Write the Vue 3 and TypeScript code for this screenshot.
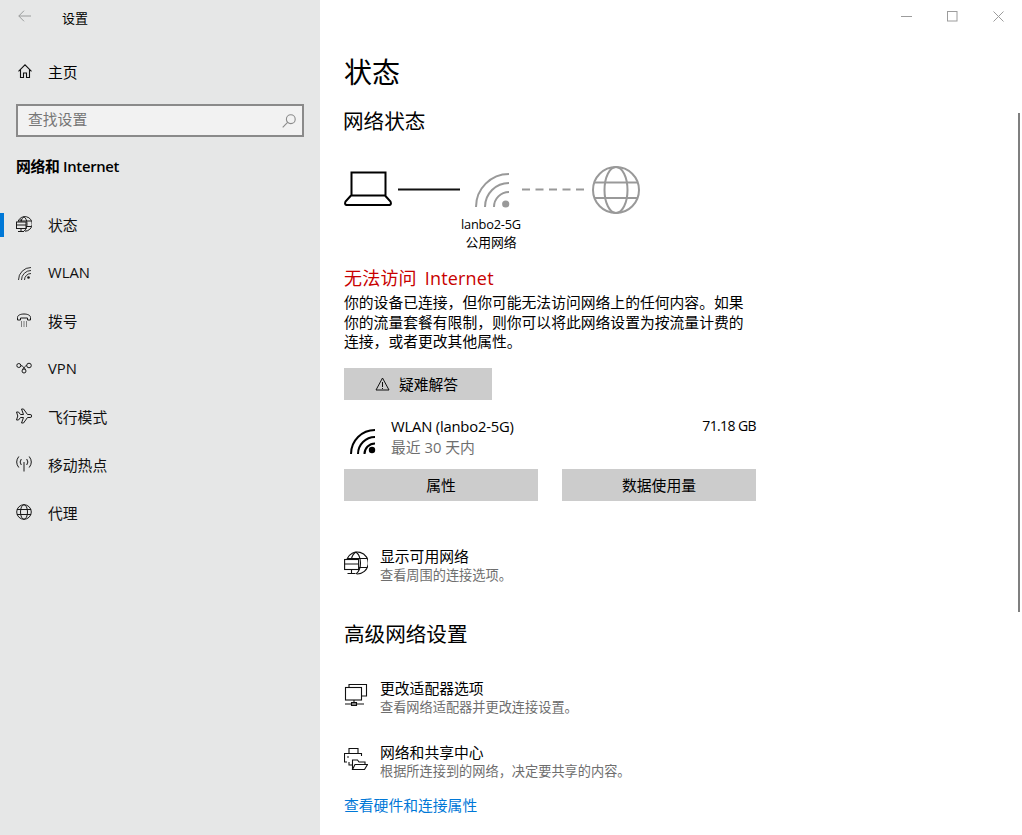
<script setup lang="ts">
type NavItem = { label: string; icon: string; active?: boolean };

const navItems: NavItem[] = [
  { label: "状态", icon: "status", active: true },
  { label: "WLAN", icon: "wifi" },
  { label: "拨号", icon: "dial" },
  { label: "VPN", icon: "vpn" },
  { label: "飞行模式", icon: "plane" },
  { label: "移动热点", icon: "hotspot" },
  { label: "代理", icon: "globe" },
];
</script>

<template>
  <div class="window">
    <aside class="sidebar">
      <div class="titlebar">
        <svg class="back" width="13" height="12" viewBox="0 0 13 12" fill="none" stroke="#9a9c9c" stroke-width="1">
          <path d="M.8 6H13M6 .7.8 6 6 11.300" />
        </svg>
        <span class="app-title">设置</span>
      </div>

      <div class="home">
        <svg width="14" height="14" viewBox="0 0 14 14" fill="none" stroke="#111" stroke-width="1.100">
          <path d="M.5 7.300 7 .8l6.500 6.500M2.500 5.500v8h3v-4.500h3v4.500h3v-8" />
        </svg>
        <span>主页</span>
      </div>

      <div class="search">
        <span class="search-text">查找设置</span>
        <svg width="14" height="14" viewBox="0 0 14 14" fill="none" stroke="#8a8a8a" stroke-width="1.100">
          <circle cx="8.800" cy="5.200" r="4.400" />
          <path d="M5.600 8.400.7 13.300" />
        </svg>
      </div>

      <div class="group-title">网络和 Internet</div>

      <nav class="nav">
        <div v-for="item in navItems" :key="item.label" class="nav-item" :class="{ active: item.active }">
          <svg class="nav-icon" width="16" height="16" viewBox="0 0 16 16" fill="none" stroke="#1a1a1a" stroke-width="1">
            <template v-if="item.icon === 'status'">
              <path d="M2 5.500A7.300 7.300 0 1 1 9 15.200" />
              <path d="M5 5V3M8 .8c-1.500 1-2.500 2.500-2.800 4.700M8 .8c2 1.500 3 4 3 7.200 0 3-1 5.500-3 7.200M2 5h13M10 10.500h5" />
              <rect x="0.500" y="6" width="9.500" height="6.500" fill="#e6e7e7" />
              <path d="M.5 9h9.500M5 12.500V15M2 15.500h6" />
            </template>
            <template v-else-if="item.icon === 'wifi'">
              <circle cx="12.500" cy="13.500" r="1.300" fill="#1a1a1a" stroke="none" />
              <path d="M2.500 16A12.500 12.500 0 0 1 15 3.500M5.500 16A9.500 9.500 0 0 1 15 6.500M8.500 16A6.500 6.500 0 0 1 15 9.500" stroke-width="0.900" />
            </template>
            <template v-else-if="item.icon === 'dial'">
              <path d="M1.500 8V5.500C1.500 3 5 2 8 2s6.500 1 6.500 3.500V8h-3V6h-7v2z" />
              <path d="M5 10h1M7.500 10h1M10 10h1M5 12h1M7.500 12h1M10 12h1M5 14h1M7.500 14h1M10 14h1" />
            </template>
            <template v-else-if="item.icon === 'vpn'">
              <circle cx="2.800" cy="5.500" r="2" />
              <circle cx="13" cy="5.500" r="2.300" />
              <circle cx="8" cy="11" r="2" />
              <path d="M4.800 5.500C7 6 8 7.500 9.500 9.500M10.800 5.500C9 6 8 7.500 6.500 9.500" />
            </template>
            <template v-else-if="item.icon === 'plane'">
              <path d="M.5 4h2l2 2.500h3L5.500 1h2l4 5.500H14q1.800 0 1.800 1.500T14 9.500h-2.500l-4 5.500h-2l2-5.500h-3l-2 2.500h-2L1.800 8z" />
            </template>
            <template v-else-if="item.icon === 'hotspot'">
              <path d="M8 6V15.500" />
              <path d="M5.300 3a4.800 4.800 0 0 0 0 6M10.700 3a4.800 4.800 0 0 1 0 6M2.800 .5a9 9 0 0 0 0 11M13.200 .5a9 9 0 0 1 0 11" />
            </template>
            <template v-else>
              <circle cx="8" cy="8" r="7.300" />
              <ellipse cx="8" cy="8" rx="3.500" ry="7.300" />
              <path d="M1 5.500h14M1 10.500h14" />
            </template>
          </svg>
          <span>{{ item.label }}</span>
        </div>
      </nav>
    </aside>

    <main class="content">
      <div class="window-controls">
        <svg width="11" height="11" viewBox="0 0 11 11" stroke="#9c9c9c" fill="none"><path d="M0 5.500h11" /></svg>
        <svg width="11" height="11" viewBox="0 0 11 11" stroke="#9c9c9c" fill="none"><rect x="0.500" y="0.500" width="9.500" height="9.500" /></svg>
        <svg width="11" height="11" viewBox="0 0 11 11" stroke="#9c9c9c" fill="none"><path d="M.5.500l10 10M10.500.500l-10 10" /></svg>
      </div>
      <div class="scrollbar"></div>

      <h1>状态</h1>
      <h2 class="network-title">网络状态</h2>

      <div class="diagram">
        <svg class="diagram-lines" width="298" height="50" viewBox="0 0 298 50" fill="none">
          <path d="M7.500 6.500h34v23h-34zM7 29.500l-5.500 6q-1.200 3 1 3.500h43q2.200-.5 1-3.500l-5.500-6" stroke="#000" stroke-width="2" />
          <path d="M54 23.500h62" stroke="#111" stroke-width="2" />
          <path d="M178 23.500h62" stroke="#999" stroke-width="2" stroke-dasharray="8 5.500" />
          <g stroke="#999" stroke-width="2">
            <path d="M132 41A33 33 0 0 1 165 8M141 41A24 24 0 0 1 165 17M150 41A15 15 0 0 1 165 26" />
            <circle cx="161.700" cy="38" r="3.600" fill="#999" stroke="none" />
            <circle cx="272" cy="24" r="23" />
            <ellipse cx="272" cy="24" rx="11.500" ry="23" />
            <path d="M250 16.500h44M250 32h44" />
          </g>
        </svg>
        <div class="diagram-label">
          <span class="ssid">lanbo2-5G</span>
          <span>公用网络</span>
        </div>
      </div>

      <div class="error-title">无法访问 Internet</div>
      <p class="error-text">你的设备已连接，但你可能无法访问网络上的任何内容。如果你的流量套餐有限制，则你可以将此网络设置为按流量计费的连接，或者更改其他属性。</p>

      <button class="btn troubleshoot">
        <svg width="15" height="14" viewBox="0 0 15 14" fill="none" stroke="#111" stroke-width="1">
          <path d="M7.500 1 14 13H1zM7.500 5v5M7.500 11v1" />
        </svg>
        <span>疑难解答</span>
      </button>

      <div class="usage">
        <svg class="usage-icon" width="26" height="26" viewBox="0 0 26 26" fill="none" stroke="#000" stroke-width="2">
          <circle cx="22" cy="22" r="3.200" fill="#000" stroke="none" />
          <path d="M1 26A24 24 0 0 1 25 2M8 26A17 17 0 0 1 25 9M14.500 26A10.500 10.500 0 0 1 25 15.500" />
        </svg>
        <div class="usage-text">
          <div class="usage-row"><span class="usage-name">WLAN (lanbo2-5G)</span><span class="usage-amount">71.18 GB</span></div>
          <div class="muted">最近 30 天内</div>
        </div>
      </div>

      <div class="btn-row">
        <button class="btn">属性</button>
        <button class="btn">数据使用量</button>
      </div>

      <div class="link-row first">
        <svg width="24" height="24" viewBox="0 0 24 24" fill="none" stroke="#111" stroke-width="1.100">
          <path d="M3 8A11 11 0 1 1 13 23" />
          <path d="M12 1C9.500 2.500 8 5 7.500 8M12 1c3 2.500 4.500 6 4.500 11 0 4.500-1.500 8.500-4.500 11M3 7.500h20M15 16.500h8" />
          <rect x="0.600" y="8.500" width="14" height="10" fill="#fff" />
          <path d="M.6 13h14M7.500 18.500V22M3.500 22.500h8" />
        </svg>
        <div>
          <div class="link-title">显示可用网络</div>
          <div class="link-desc">查看周围的连接选项。</div>
        </div>
      </div>

      <h2 class="advanced">高级网络设置</h2>

      <div class="link-row">
        <svg width="24" height="24" viewBox="0 0 24 24" fill="none" stroke="#111" stroke-width="1.100">
          <path d="M5 4.500v-3h17.500V13h-5" />
          <rect x="1.500" y="4.500" width="16" height="12.500" fill="#fff" />
          <path d="M10 17v2.500M1 21h19M7.500 19.500h5v3h-5z" />
        </svg>
        <div>
          <div class="link-title">更改适配器选项</div>
          <div class="link-desc">查看网络适配器并更改连接设置。</div>
        </div>
      </div>

      <div class="link-row sharing">
        <svg width="24" height="24" viewBox="0 0 24 24" fill="none" stroke="#111" stroke-width="1.100">
          <path d="M5 6V1.500h9V6M3 15H.5V6.500h17V9M5 15v3h4" />
          <path d="M3 10h2" />
          <path d="M8.500 22.500V13h5l1.500 2h6v2.500M8.500 22.500 11 17.500h12.500l-3 5z" fill="#fff" />
        </svg>
        <div>
          <div class="link-title">网络和共享中心</div>
          <div class="link-desc">根据所连接到的网络，决定要共享的内容。</div>
        </div>
      </div>

      <a class="hw-link">查看硬件和连接属性</a>
    </main>
  </div>
</template>

<style>
html,
body {
  margin: 0;
  overflow: hidden;
}
</style>

<style scoped>
.window {
  display: flex;
  width: 1022px;
  height: 835px;
  overflow: hidden;
  background: #fff;
  color: #000;
  font-family: "Open Sans", "Noto Sans CJK SC", sans-serif;
  font-size: 14.8px;
}

.sidebar {
  flex: none;
  width: 320px;
  background: #e6e7e7;
}

.titlebar {
  display: flex;
  align-items: center;
  height: 35px;
  padding-left: 18px;
  font-size: 13px;
}

.back {
  margin-top: -3px;
}

.app-title {
  margin-left: 31px;
}

.home {
  display: flex;
  align-items: center;
  gap: 16px;
  height: 48px;
  margin-top: 12px;
  padding-left: 18px;
}

.search {
  display: flex;
  align-items: center;
  justify-content: space-between;
  box-sizing: border-box;
  width: 288px;
  height: 33px;
  margin: 9px 0 0 16px;
  padding: 0 6px 0 10px;
  background: #f2f2f2;
  border: 2px solid #8a8a8a;
  color: #767676;
}

.search-text {
  margin-top: -5px;
}

.group-title {
  margin: 18px 0 0 16px;
  font-weight: 600;
  line-height: 22px;
  letter-spacing: -0.3px;
}

.nav {
  margin-top: 23px;
}

.nav-item {
  position: relative;
  display: flex;
  align-items: center;
  gap: 16px;
  height: 48px;
  padding-left: 16px;
  color: #111;
}

.nav-item.active::before {
  content: "";
  position: absolute;
  left: 0;
  top: 13px;
  width: 4px;
  height: 24px;
  background: #0078d7;
}

.content {
  position: relative;
  flex: 1;
  box-sizing: border-box;
  padding: 0 0 0 24px;
}

.window-controls {
  position: absolute;
  top: 11px;
  right: 18px;
  display: flex;
  gap: 35px;
}

.scrollbar {
  position: absolute;
  top: 113px;
  right: 2px;
  width: 2px;
  height: 499px;
  background: #7f7f7f;
}

h1 {
  margin: 0;
  padding-top: 52px;
  font-size: 28px;
  font-weight: 400;
  line-height: 40px;
}

h2 {
  margin: 0;
  font-size: 20.6px;
  font-weight: 400;
  line-height: 28px;
}

.network-title {
  margin-top: 15px;
  margin-left: -1px;
}

.diagram {
  position: relative;
  height: 99px;
  margin-top: 31px;
}

.diagram-lines {
  display: block;
}

.diagram-label {
  position: absolute;
  left: 100px;
  top: 49px;
  width: 94px;
  display: flex;
  flex-direction: column;
  align-items: center;
  font-size: 12.8px;
  line-height: 18px;
}

.ssid {
  letter-spacing: -0.2px;
}

.error-title {
  color: #c80000;
  font-size: 18px;
  line-height: 26px;
  letter-spacing: 0.2px;
  word-spacing: 3px;
}

.error-text {
  width: 412px;
  margin: 2px 0 0;
  line-height: 19.5px;
}

.btn {
  display: block;
  border: 0;
  height: 32px;
  background: #cccccc;
  color: #000;
  font: inherit;
  padding: 0;
}

.troubleshoot {
  display: flex;
  align-items: center;
  justify-content: center;
  gap: 9px;
  width: 148px;
  margin-top: 16px;
  padding-right: 3px;
}

.usage {
  display: flex;
  width: 412px;
  height: 44px;
  margin-top: 15px;
}

.usage-icon {
  flex: none;
  margin: 13px 15px 0 6px;
}

.usage-text {
  flex: 1;
  line-height: 22px;
}

.usage-row {
  display: flex;
  justify-content: space-between;
}

.usage-name {
  letter-spacing: -0.2px;
}

.usage-amount {
  font-size: 14px;
  letter-spacing: -0.6px;
}

.muted {
  margin-top: -1px;
  color: #6e6e6e;
}

.btn-row {
  display: flex;
  gap: 24px;
  width: 412px;
  margin-top: 10px;
}

.btn-row .btn {
  flex: 1;
}

.link-row {
  display: flex;
  gap: 12px;
  align-items: flex-start;
}

.link-row svg {
  flex: none;
  margin-top: 4px;
}

.link-row.first {
  margin-top: 46px;
}

.link-row.sharing {
  margin-top: 27px;
}

.link-title {
  line-height: 19px;
}

.link-desc {
  color: #6e6e6e;
  font-size: 13.2px;
  line-height: 18px;
}

.advanced {
  margin-top: 36px;
  margin-bottom: 31px;
}

.hw-link {
  display: block;
  margin-top: 15px;
  color: #0078d7;
  line-height: 20px;
}
</style>
